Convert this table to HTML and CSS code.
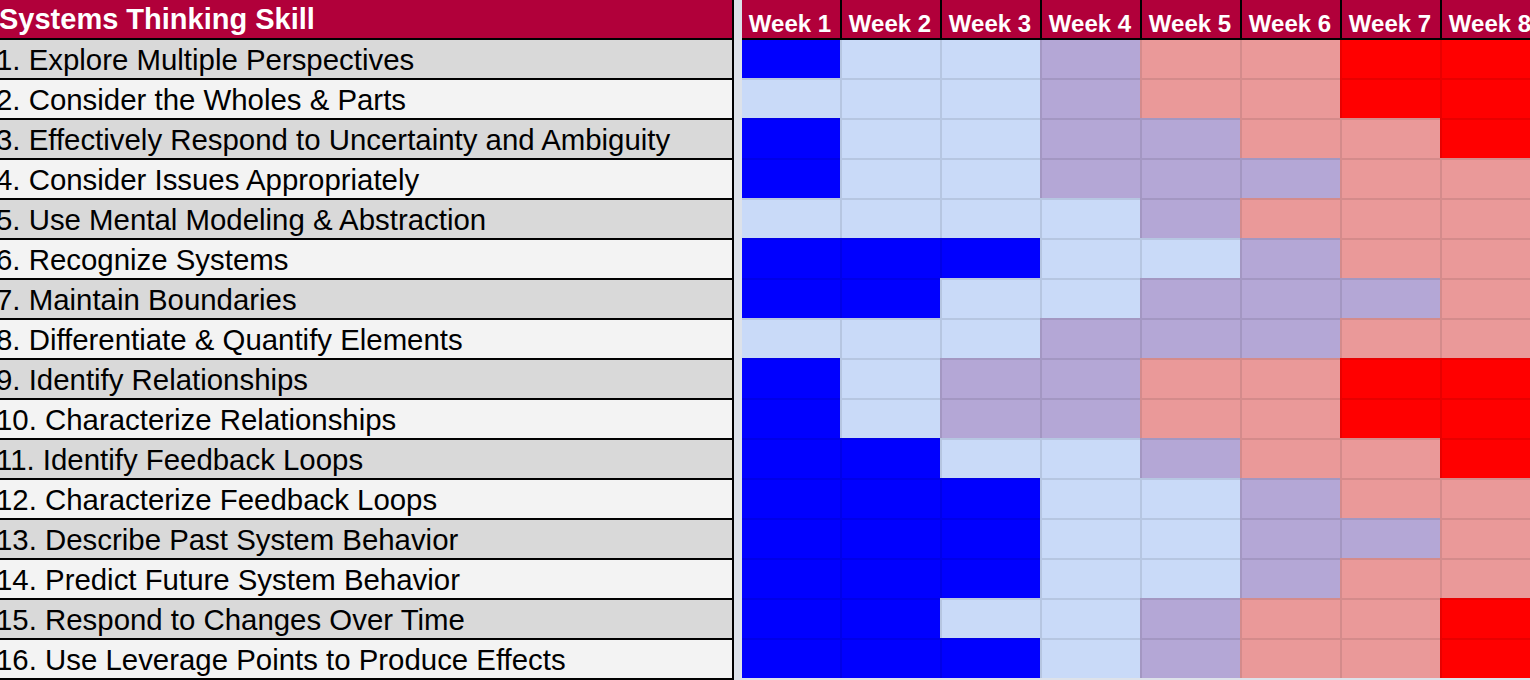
FILE: index.html
```html
<!DOCTYPE html>
<html>
<head>
<meta charset="utf-8">
<link rel="stylesheet" href="styles.css">
</head>
<body>
<div class="sheet">
  <div class="skills">
    <div class="skill head">Systems Thinking Skill</div>
    <div class="skill odd">1. Explore Multiple Perspectives</div>
    <div class="skill even">2. Consider the Wholes &amp; Parts</div>
    <div class="skill odd">3. Effectively Respond to Uncertainty and Ambiguity</div>
    <div class="skill even">4. Consider Issues Appropriately</div>
    <div class="skill odd">5. Use Mental Modeling &amp; Abstraction</div>
    <div class="skill even">6. Recognize Systems</div>
    <div class="skill odd">7. Maintain Boundaries</div>
    <div class="skill even">8. Differentiate &amp; Quantify Elements</div>
    <div class="skill odd">9. Identify Relationships</div>
    <div class="skill even">10. Characterize Relationships</div>
    <div class="skill odd">11. Identify Feedback Loops</div>
    <div class="skill even">12. Characterize Feedback Loops</div>
    <div class="skill odd">13. Describe Past System Behavior</div>
    <div class="skill even">14. Predict Future System Behavior</div>
    <div class="skill odd">15. Respond to Changes Over Time</div>
    <div class="skill even">16. Use Leverage Points to Produce Effects</div>
  </div>
  <div class="divider"></div>
  <div class="weeks">
    <div class="wk">Week 1</div><div class="wk">Week 2</div><div class="wk">Week 3</div><div class="wk">Week 4</div><div class="wk">Week 5</div><div class="wk">Week 6</div><div class="wk">Week 7</div><div class="wk">Week 8</div>

    <div class="c b"></div><div class="c l"></div><div class="c l"></div><div class="c p"></div><div class="c k"></div><div class="c k"></div><div class="c r"></div><div class="c r"></div>
    <div class="c l"></div><div class="c l"></div><div class="c l"></div><div class="c p"></div><div class="c k"></div><div class="c k"></div><div class="c r"></div><div class="c r"></div>
    <div class="c b"></div><div class="c l"></div><div class="c l"></div><div class="c p"></div><div class="c p"></div><div class="c k"></div><div class="c k"></div><div class="c r"></div>
    <div class="c b"></div><div class="c l"></div><div class="c l"></div><div class="c p"></div><div class="c p"></div><div class="c p"></div><div class="c k"></div><div class="c k"></div>
    <div class="c l"></div><div class="c l"></div><div class="c l"></div><div class="c l"></div><div class="c p"></div><div class="c k"></div><div class="c k"></div><div class="c k"></div>
    <div class="c b"></div><div class="c b"></div><div class="c b"></div><div class="c l"></div><div class="c l"></div><div class="c p"></div><div class="c k"></div><div class="c k"></div>
    <div class="c b"></div><div class="c b"></div><div class="c l"></div><div class="c l"></div><div class="c p"></div><div class="c p"></div><div class="c p"></div><div class="c k"></div>
    <div class="c l"></div><div class="c l"></div><div class="c l"></div><div class="c p"></div><div class="c p"></div><div class="c p"></div><div class="c k"></div><div class="c k"></div>
    <div class="c b"></div><div class="c l"></div><div class="c p"></div><div class="c p"></div><div class="c k"></div><div class="c k"></div><div class="c r"></div><div class="c r"></div>
    <div class="c b"></div><div class="c l"></div><div class="c p"></div><div class="c p"></div><div class="c k"></div><div class="c k"></div><div class="c r"></div><div class="c r"></div>
    <div class="c b"></div><div class="c b"></div><div class="c l"></div><div class="c l"></div><div class="c p"></div><div class="c k"></div><div class="c k"></div><div class="c r"></div>
    <div class="c b"></div><div class="c b"></div><div class="c b"></div><div class="c l"></div><div class="c l"></div><div class="c p"></div><div class="c k"></div><div class="c k"></div>
    <div class="c b"></div><div class="c b"></div><div class="c b"></div><div class="c l"></div><div class="c l"></div><div class="c p"></div><div class="c p"></div><div class="c k"></div>
    <div class="c b"></div><div class="c b"></div><div class="c b"></div><div class="c l"></div><div class="c l"></div><div class="c p"></div><div class="c k"></div><div class="c k"></div>
    <div class="c b"></div><div class="c b"></div><div class="c l"></div><div class="c l"></div><div class="c p"></div><div class="c k"></div><div class="c k"></div><div class="c r"></div>
    <div class="c b"></div><div class="c b"></div><div class="c b"></div><div class="c l"></div><div class="c p"></div><div class="c k"></div><div class="c k"></div><div class="c r"></div>
  </div>
</div>
</body>
</html>
```

FILE: styles.css
```css
html, body {
  margin: 0;
  padding: 0;
  overflow: hidden;
  background: #dde2ea;
}

.sheet {
  display: flex;
  width: 1540px;
  height: 680px;
  font-family: "Liberation Sans", Arial, sans-serif;
}

.skills {
  width: 732px;
  flex: none;
  border-right: 2px solid #000;
  display: flex;
  flex-direction: column;
}

.skill {
  height: 38px;
  line-height: 40px;
  font-size: 29.4px;
  color: #000;
  white-space: nowrap;
  overflow: hidden;
  border-bottom: 2px solid #000;
  text-indent: -4px;
}

.skill.head {
  background: #b1003a;
  color: #fff;
  font-weight: bold;
  font-size: 29px;
  line-height: 38px;
  text-indent: -1px;
}

.skill.odd { background: #d9d9d9; }
.skill.even { background: #f3f3f3; }

.divider {
  width: 8px;
  flex: none;
  background: #dde2ea;
}

.weeks {
  flex: none;
  display: grid;
  grid-template-columns: 98px repeat(7, 100px);
  grid-template-rows: 40px 38px repeat(15, 40px);
}

.wk {
  background: #b1003a;
  color: #fff;
  font-weight: bold;
  font-size: 24px;
  line-height: 1;
  border-bottom: 2px solid #000;
  border-left: 2px solid #000;
  display: flex;
  align-items: flex-end;
  justify-content: center;
  padding-bottom: 2px;
  padding-right: 2px;
  white-space: nowrap;
}

.wk:first-child { border-left: none; }

.c {
  border-top: 2px solid rgba(0, 0, 0, 0.09);
  border-left: 2px solid rgba(0, 0, 0, 0.09);
}

.c:nth-child(8n + 1) { border-left: none; }
.c:nth-child(-n + 16) { border-top: none; }

.b { background: #0000ff; }
.l { background: #c9daf8; }
.p { background: #b4a7d6; }
.k { background: #ea9999; }
.r { background: #ff0000; }
```
